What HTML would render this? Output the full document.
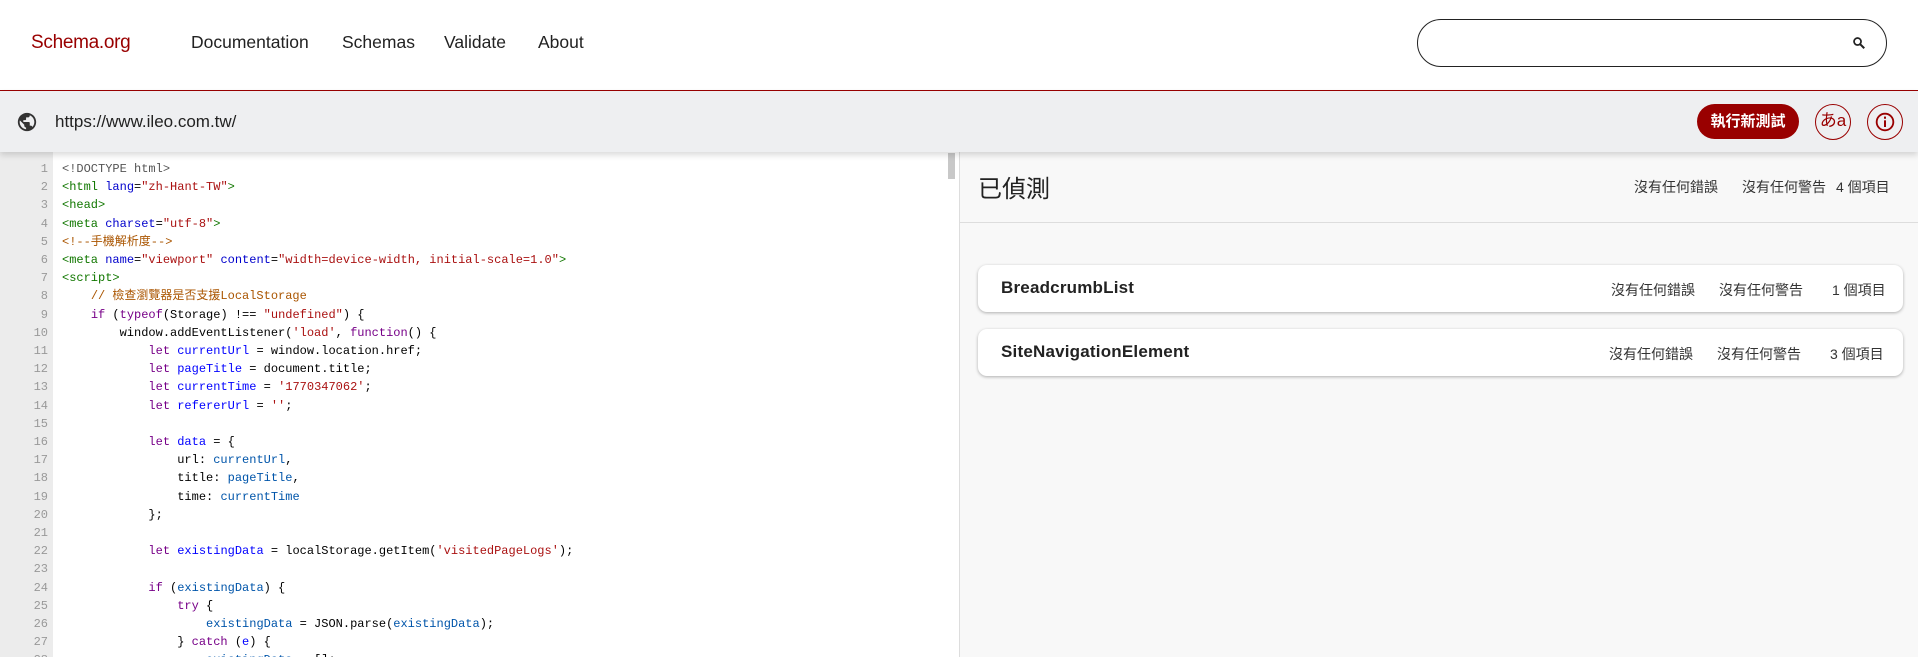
<!DOCTYPE html>
<html><head><meta charset="utf-8"><style>
*{box-sizing:border-box;margin:0;padding:0}
body{width:1918px;height:657px;overflow:hidden;background:#fff;font-family:"Liberation Sans","Noto Sans CJK TC",sans-serif;position:relative;color:#222}
.hdr{position:absolute;left:0;top:0;width:1918px;height:91px;border-bottom:1.5px solid #990000;background:#fff}
.logo{position:absolute;left:31px;top:32px;font-size:19px;color:#990000;letter-spacing:-0.3px}
.nav{position:absolute;top:32px;font-size:17.5px;color:#222}
.search{position:absolute;left:1417px;top:19px;width:470px;height:48px;border:1.3px solid #222;border-radius:24px}
.bar{position:absolute;left:0;top:91px;width:1918px;height:61px;background:#eeeff1;box-shadow:0 3px 6px rgba(0,0,0,.15);z-index:2}
.url{position:absolute;left:55px;top:21px;font-size:17px;color:#222}
.btn{position:absolute;left:1697px;top:13px;width:102px;height:35px;border-radius:18px;background:#990000;color:#fff;font-size:15px;font-weight:bold;text-align:center;line-height:35px}
.circ{position:absolute;top:13px;width:36px;height:36px;border:1.5px solid #990000;border-radius:50%;color:#990000;text-align:center}
.code{position:absolute;left:0;top:152px;width:959px;height:505px;background:#fff;overflow:hidden}
.gut{position:absolute;left:0;top:0;width:53px;height:505px;background:#ececec}
.ln{position:absolute;left:0;width:48px;text-align:right;font:12px/14px "Liberation Mono",monospace;color:#999}
.cl{position:absolute;left:62px;font:12px/14px "Liberation Mono","Noto Sans CJK TC",monospace;white-space:pre;color:#000;height:14px}
.m{color:#555}
.t{color:#170}.a{color:#00c}.s{color:#a11}.c{color:#a50}.k{color:#708}.d{color:#00f}.v{color:#05a}
.sb{position:absolute;left:948px;top:1px;width:7px;height:26px;background:#c8c8c8}
.right{position:absolute;left:959px;top:152px;width:959px;height:505px;background:#f8f8f8;border-left:1px solid #ddd}
.card{position:absolute;left:18px;width:925px;height:47px;background:#fff;border-radius:9px;box-shadow:0 1px 3px rgba(0,0,0,.3)}
.ct{position:absolute;left:23px;top:13px;font-size:17px;font-weight:bold;color:#222;letter-spacing:.2px}
.st{position:absolute;top:15px;font-size:14px;color:#333}
</style></head><body>
<div class="hdr">
<div class="logo">Schema.org</div>
<div class="nav" style="left:191px">Documentation</div>
<div class="nav" style="left:342px">Schemas</div>
<div class="nav" style="left:444px">Validate</div>
<div class="nav" style="left:538px">About</div>
<div class="search"><svg style="position:absolute;left:434px;top:16px" width="14" height="14" viewBox="0 0 24 24"><circle cx="9.5" cy="9.5" r="6" fill="none" stroke="#222" stroke-width="3"/><path d="M14 14l7 7" stroke="#222" stroke-width="3.5"/></svg></div>
</div>
<div class="bar">
<svg style="position:absolute;left:16px;top:20px" width="22" height="22" viewBox="0 0 24 24"><path fill="#333" d="M12 2C6.48 2 2 6.480 2 12s4.48 10 10 10 10-4.48 10-10S17.52 2 12 2zm-1 17.930c-3.950-.49-7-3.850-7-7.930 0-.62.08-1.210.21-1.790L9 15v1c0 1.100.9 2 2 2v1.930zm6.900-2.540c-.26-.81-1-1.390-1.900-1.390h-1v-3c0-.55-.45-1-1-1H8v-2h2c.55 0 1-.45 1-1V7h2c1.100 0 2-.9 2-2v-.41c2.930 1.190 5 4.060 5 7.410 0 2.080-.8 3.970-2.100 5.390z"/></svg>
<div class="url">https://www.ileo.com.tw/</div>
<div class="btn">執行新測試</div>
<div class="circ" style="left:1815px;font-size:17px;line-height:32px">あa</div>
<div class="circ" style="left:1867px"><svg style="position:absolute;left:7px;top:7px" width="20" height="20" viewBox="0 0 24 24"><circle cx="12" cy="12" r="10" fill="none" stroke="#990000" stroke-width="2.2"/><rect x="10.8" y="10" width="2.4" height="8" fill="#990000"/><rect x="10.8" y="5.5" width="2.4" height="2.6" fill="#990000"/></svg></div>
</div>
<div class="code">
<div class="gut"></div>
<div class="ln" style="top:10px">1</div><div class="cl m" style="top:10px">&lt;!DOCTYPE html&gt;</div>
<div class="ln" style="top:28px">2</div><div class="cl" style="top:28px"><span class="t">&lt;html</span> <span class="a">lang</span>=<span class="s">"zh-Hant-TW"</span><span class="t">&gt;</span></div>
<div class="ln" style="top:46px">3</div><div class="cl" style="top:46px"><span class="t">&lt;head&gt;</span></div>
<div class="ln" style="top:65px">4</div><div class="cl" style="top:65px"><span class="t">&lt;meta</span> <span class="a">charset</span>=<span class="s">"utf-8"</span><span class="t">&gt;</span></div>
<div class="ln" style="top:83px">5</div><div class="cl" style="top:83px"><span class="c">&lt;!--手機解析度--&gt;</span></div>
<div class="ln" style="top:101px">6</div><div class="cl" style="top:101px"><span class="t">&lt;meta</span> <span class="a">name</span>=<span class="s">"viewport"</span> <span class="a">content</span>=<span class="s">"width=device-width, initial-scale=1.0"</span><span class="t">&gt;</span></div>
<div class="ln" style="top:119px">7</div><div class="cl" style="top:119px"><span class="t">&lt;script&gt;</span></div>
<div class="ln" style="top:137px">8</div><div class="cl" style="top:137px">    <span class="c">// 檢查瀏覽器是否支援LocalStorage</span></div>
<div class="ln" style="top:156px">9</div><div class="cl" style="top:156px">    <span class="k">if</span> (<span class="k">typeof</span>(Storage) !== <span class="s">"undefined"</span>) {</div>
<div class="ln" style="top:174px">10</div><div class="cl" style="top:174px">        window.addEventListener(<span class="s">'load'</span>, <span class="k">function</span>() {</div>
<div class="ln" style="top:192px">11</div><div class="cl" style="top:192px">            <span class="k">let</span> <span class="d">currentUrl</span> = window.location.href;</div>
<div class="ln" style="top:210px">12</div><div class="cl" style="top:210px">            <span class="k">let</span> <span class="d">pageTitle</span> = document.title;</div>
<div class="ln" style="top:228px">13</div><div class="cl" style="top:228px">            <span class="k">let</span> <span class="d">currentTime</span> = <span class="s">'1770347062'</span>;</div>
<div class="ln" style="top:247px">14</div><div class="cl" style="top:247px">            <span class="k">let</span> <span class="d">refererUrl</span> = <span class="s">''</span>;</div>
<div class="ln" style="top:265px">15</div>
<div class="ln" style="top:283px">16</div><div class="cl" style="top:283px">            <span class="k">let</span> <span class="d">data</span> = {</div>
<div class="ln" style="top:301px">17</div><div class="cl" style="top:301px">                url: <span class="v">currentUrl</span>,</div>
<div class="ln" style="top:319px">18</div><div class="cl" style="top:319px">                title: <span class="v">pageTitle</span>,</div>
<div class="ln" style="top:338px">19</div><div class="cl" style="top:338px">                time: <span class="v">currentTime</span></div>
<div class="ln" style="top:356px">20</div><div class="cl" style="top:356px">            };</div>
<div class="ln" style="top:374px">21</div>
<div class="ln" style="top:392px">22</div><div class="cl" style="top:392px">            <span class="k">let</span> <span class="d">existingData</span> = localStorage.getItem(<span class="s">'visitedPageLogs'</span>);</div>
<div class="ln" style="top:410px">23</div>
<div class="ln" style="top:429px">24</div><div class="cl" style="top:429px">            <span class="k">if</span> (<span class="v">existingData</span>) {</div>
<div class="ln" style="top:447px">25</div><div class="cl" style="top:447px">                <span class="k">try</span> {</div>
<div class="ln" style="top:465px">26</div><div class="cl" style="top:465px">                    <span class="v">existingData</span> = JSON.parse(<span class="v">existingData</span>);</div>
<div class="ln" style="top:483px">27</div><div class="cl" style="top:483px">                } <span class="k">catch</span> (<span class="d">e</span>) {</div>
<div class="ln" style="top:501px">28</div><div class="cl" style="top:501px">                    <span class="v">existingData</span> = [];</div>
<div class="sb"></div>
</div>
<div class="right">
<div style="position:absolute;left:18px;top:17px;font-size:24px;color:#222">已偵測</div>
<div class="st" style="left:674px;top:25px">沒有任何錯誤</div>
<div class="st" style="left:782px;top:25px">沒有任何警告</div>
<div class="st" style="left:876px;top:25px">4 個項目</div>
<div style="position:absolute;left:0;top:70px;width:959px;height:1px;background:#ddd"></div>
<div class="card" style="top:113px"><div class="ct">BreadcrumbList</div><div class="st" style="left:633px">沒有任何錯誤</div><div class="st" style="left:741px">沒有任何警告</div><div class="st" style="left:854px">1 個項目</div></div>
<div class="card" style="top:177px"><div class="ct">SiteNavigationElement</div><div class="st" style="left:631px">沒有任何錯誤</div><div class="st" style="left:739px">沒有任何警告</div><div class="st" style="left:852px">3 個項目</div></div>
</div>
</body></html>
